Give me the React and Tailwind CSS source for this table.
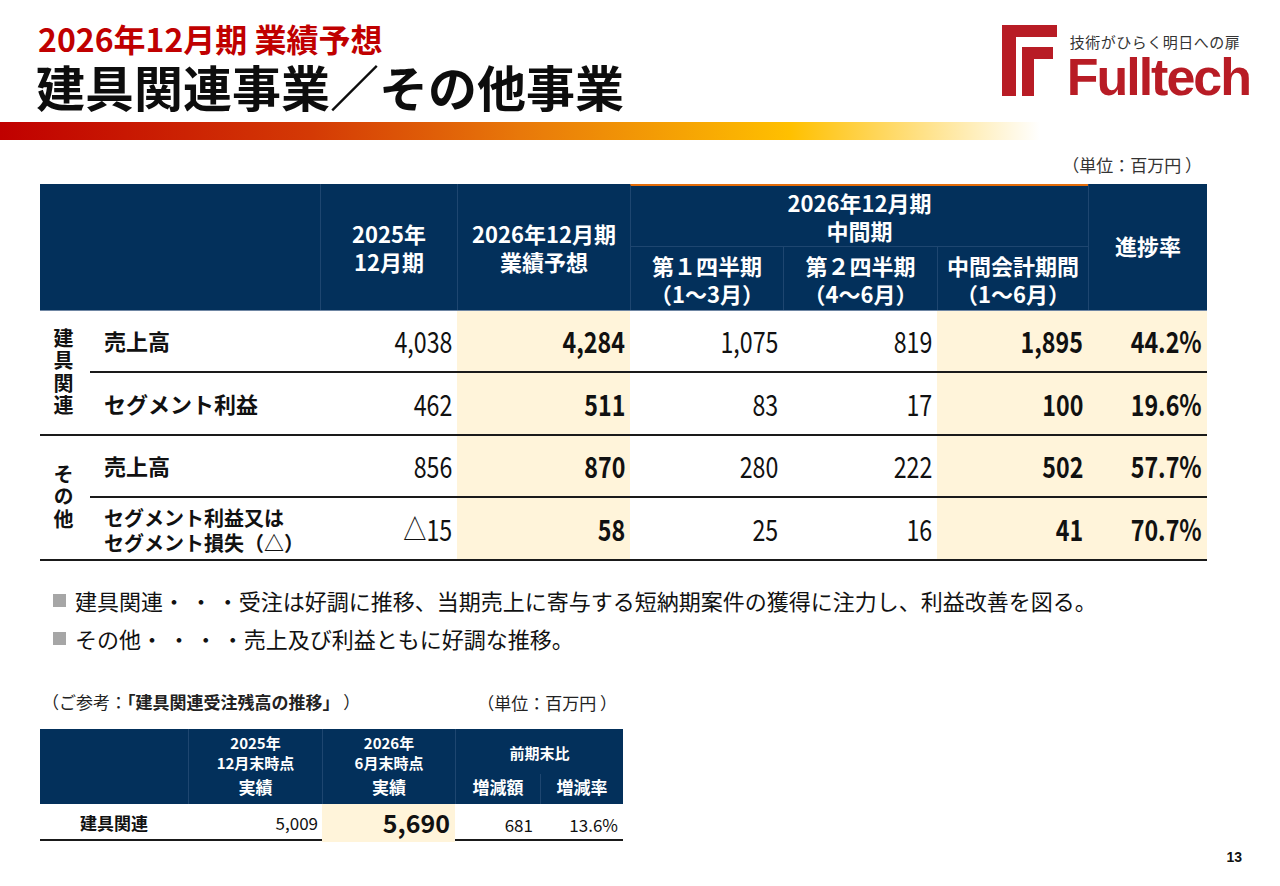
import React from "react";

const JP = "font-['Noto_Sans_CJK_JP',sans-serif]";
const NUM = "font-['Noto_Sans_CJK_JP',sans-serif]";

function Logo() {
  return (
    <div className="flex items-start gap-[12px] pt-[25px]">
      <svg width="56" height="72" viewBox="0 0 56 72" className="shrink-0">
        <path d="M0 0 H55 V12 H14 V71 H0 Z" fill="#b81c25" />
        <path d="M20 22 H51 V34 H32 V71 H20 Z" fill="#b81c25" />
      </svg>
      <div className="flex flex-col">
        <span className={`${JP} text-[15px] leading-[20px] text-[#333] tracking-[0.5px] mt-[7px]`}>
          技術がひらく明日への扉
        </span>
        <span className="font-['Liberation_Sans',sans-serif] font-bold text-[52px] leading-[52px] tracking-[-2px] text-[#b81c25] -ml-[3px] -mt-[1px]">
          Fulltech
        </span>
      </div>
    </div>
  );
}

function Num({ v, bold, cream }) {
  return (
    <div
      className={`flex items-center justify-end pr-[5px] border-b-2 border-[#1a1a1a] ${NUM} text-[29px] text-[#111] ${
        bold ? "font-bold" : ""
      } ${cream ? "bg-[#fff4da]" : ""}`}
    >
      <span className="inline-block origin-right scale-x-[0.8]">{v}</span>
    </div>
  );
}

const rows = [
  { label: "売上高", vals: ["4,038", "4,284", "1,075", "819", "1,895", "44.2%"] },
  { label: "セグメント利益", vals: ["462", "511", "83", "17", "100", "19.6%"] },
  { label: "売上高", vals: ["856", "870", "280", "222", "502", "57.7%"] },
  { label: ["セグメント利益又は", "セグメント損失（△）"], vals: ["△15", "58", "25", "16", "41", "70.7%"] },
];

const COLS = "grid-cols-[50px_230px_137px_173px_153px_154px_151px_119px]";

function MainTable() {
  const hd = `${NUM} text-white font-bold text-[22px] leading-[28px] text-center flex flex-col items-center justify-center`;
  return (
    <div className="ml-[40px] w-[1167px]">
      <div className={`grid ${COLS} grid-rows-[63px_63px] bg-[#03305b] border-b border-[#6f86a3]`}>
        <div className="col-span-2 row-span-2" />
        <div className={`row-span-2 border-l border-[#1e4670] ${hd}`}>
          <span>2025年</span>
          <span>12月期</span>
        </div>
        <div className={`row-span-2 border-l border-[#1e4670] ${hd}`}>
          <span>2026年12月期</span>
          <span>業績予想</span>
        </div>
        <div className={`col-span-3 border-l border-[#1e4670] border-t-2 border-t-[#e36c0a] border-b border-b-[#1e4670] ${hd}`}>
          <span>2026年12月期</span>
          <span>中間期</span>
        </div>
        <div className={`row-span-2 border-l border-[#1e4670] ${hd} pb-[4px]`}>
          <span>進捗率</span>
        </div>
        <div className={`border-l border-[#1e4670] ${hd}`}>
          <span>第１四半期</span>
          <span>（1～3月）</span>
        </div>
        <div className={`border-l border-[#1e4670] ${hd}`}>
          <span>第２四半期</span>
          <span>（4～6月）</span>
        </div>
        <div className={`border-l border-[#1e4670] ${hd}`}>
          <span>中間会計期間</span>
          <span>（1～6月）</span>
        </div>
      </div>

      <div className={`grid ${COLS} grid-rows-[62px_63px_62px_63px]`}>
        {rows.map((r, i) => (
          <React.Fragment key={i}>
            {i % 2 === 0 && (
              <div
                className={`row-span-2 border-b-2 border-[#1a1a1a] flex items-center justify-center ${JP} font-bold text-[20px] text-[#111] pr-[4px]`}
              >
                <span className="[writing-mode:vertical-rl] tracking-[2.5px] leading-[24px]">
                  {i === 0 ? "建具関連" : "その他"}
                </span>
              </div>
            )}
            <div
              className={`flex flex-col justify-center pl-[14px] border-b-2 border-[#1a1a1a] ${JP} font-bold text-[#111] ${
                Array.isArray(r.label) ? "text-[20px] leading-[25px] pt-[2px]" : "text-[22px] leading-[28px] pb-[2px]"
              }`}
            >
              {Array.isArray(r.label) ? r.label.map((l) => <span key={l}>{l}</span>) : r.label}
            </div>
            <Num v={r.vals[0]} />
            <Num v={r.vals[1]} bold cream />
            <Num v={r.vals[2]} />
            <Num v={r.vals[3]} />
            <Num v={r.vals[4]} bold cream />
            <Num v={r.vals[5]} bold cream />
          </React.Fragment>
        ))}
      </div>
    </div>
  );
}

function Bullets() {
  const items = [
    "建具関連・ ・ ・受注は好調に推移、当期売上に寄与する短納期案件の獲得に注力し、利益改善を図る。",
    "その他・ ・ ・ ・売上及び利益ともに好調な推移。",
  ];
  return (
    <div className={`ml-[53px] mt-[20px] flex flex-col ${JP} text-[22px] leading-[38px] text-[#111]`}>
      {items.map((t) => (
        <div key={t} className="flex items-center gap-[9px]">
          <span className="w-[13px] h-[13px] bg-[#a6a6a6] shrink-0" />
          <span>{t}</span>
        </div>
      ))}
    </div>
  );
}

function SmallTable() {
  const hc = `${JP} text-white font-bold text-[15px] leading-[20px] text-center flex flex-col items-center justify-center`;
  return (
    <div className="ml-[40px] mt-[32px] w-[583px]">
      <div className={`flex justify-between items-center ${JP} text-[17px] leading-[22px] text-[#222] pl-[2px] pr-[6px]`}>
        <span>
          （ご参考：<span className="font-bold">「建具関連受注残高の推移」</span> ）
        </span>
        <span className="mt-[3px]">（単位：百万円 ）</span>
      </div>
      <div className="mt-[15px] grid grid-cols-[148px_134px_133px_85px_83px] grid-rows-[45px_30px] bg-[#03305b]">
        <div className="row-span-2" />
        <div className={`border-l border-[#1e4670] ${hc} pt-[2px]`}>
          <span>2025年</span>
          <span>12月末時点</span>
        </div>
        <div className={`border-l border-[#1e4670] ${hc} pt-[2px]`}>
          <span>2026年</span>
          <span>6月末時点</span>
        </div>
        <div className={`col-span-2 border-l border-[#1e4670] ${hc} pt-[2px]`}>
          <span>前期末比</span>
        </div>
        <div className={`border-l border-[#1e4670] ${hc} text-[17px] pb-[4px]`}>実績</div>
        <div className={`border-l border-[#1e4670] ${hc} text-[17px] pb-[4px]`}>実績</div>
        <div className={`border-l border-[#1e4670] ${hc} text-[17px] pb-[4px]`}>増減額</div>
        <div className={`border-l border-[#1e4670] ${hc} text-[17px] pb-[4px]`}>増減率</div>
      </div>
      <div className="grid grid-cols-[148px_134px_133px_85px_83px] h-[37px] border-b-2 border-[#1a1a1a]">
        <div className={`flex items-center pl-[40px] ${JP} font-bold text-[17px] text-[#111]`}>建具関連</div>
        <div className={`flex items-center justify-end pr-[4px] ${JP} text-[17px] text-[#111]`}>5,009</div>
        <div className={`flex items-center justify-end pr-[5px] bg-[#fff4da] ${JP} font-bold text-[25px] text-[#111]`}>5,690</div>
        <div className={`flex items-center justify-end pr-[7px] ${JP} text-[17px] text-[#111] pt-[4px]`}>681</div>
        <div className={`flex items-center justify-end pr-[5px] ${JP} text-[17px] text-[#111] pt-[4px]`}>13.6%</div>
      </div>
    </div>
  );
}

export default function App() {
  return (
    <div className={`w-[1280px] h-[886px] bg-white relative overflow-hidden ${JP}`}>
      <div className="flex justify-between pl-[38px] pr-[30px]">
        <div className="flex flex-col pt-[19px]">
          <h2 className={`${NUM} font-bold text-[32px] leading-[38px] text-[#c00000]`}>2026年12月期 業績予想</h2>
          <h1 className={`${JP} font-bold text-[49px] leading-[58px] text-[#0d0d0d] -ml-[2px]`}>建具関連事業／その他事業</h1>
        </div>
        <Logo />
      </div>

      <div className="mt-[7px] h-[18px] w-[1040px] bg-[linear-gradient(90deg,#c00000_0%,#d43a05_30%,#e8780a_50%,#ffc000_76%,#ffffff_100%)]" />

      <div className={`mt-[14px] h-[22px] text-right pr-[78px] ${JP} text-[17px] leading-[22px] text-[#333]`}>
        （単位：百万円 ）
      </div>
      <div className="mt-[8px]">
        <MainTable />
      </div>

      <Bullets />
      <SmallTable />

      <div className="absolute right-[38px] bottom-[18px] font-['Liberation_Sans',sans-serif] font-bold text-[14px] text-[#111]">
        13
      </div>
    </div>
  );
}
